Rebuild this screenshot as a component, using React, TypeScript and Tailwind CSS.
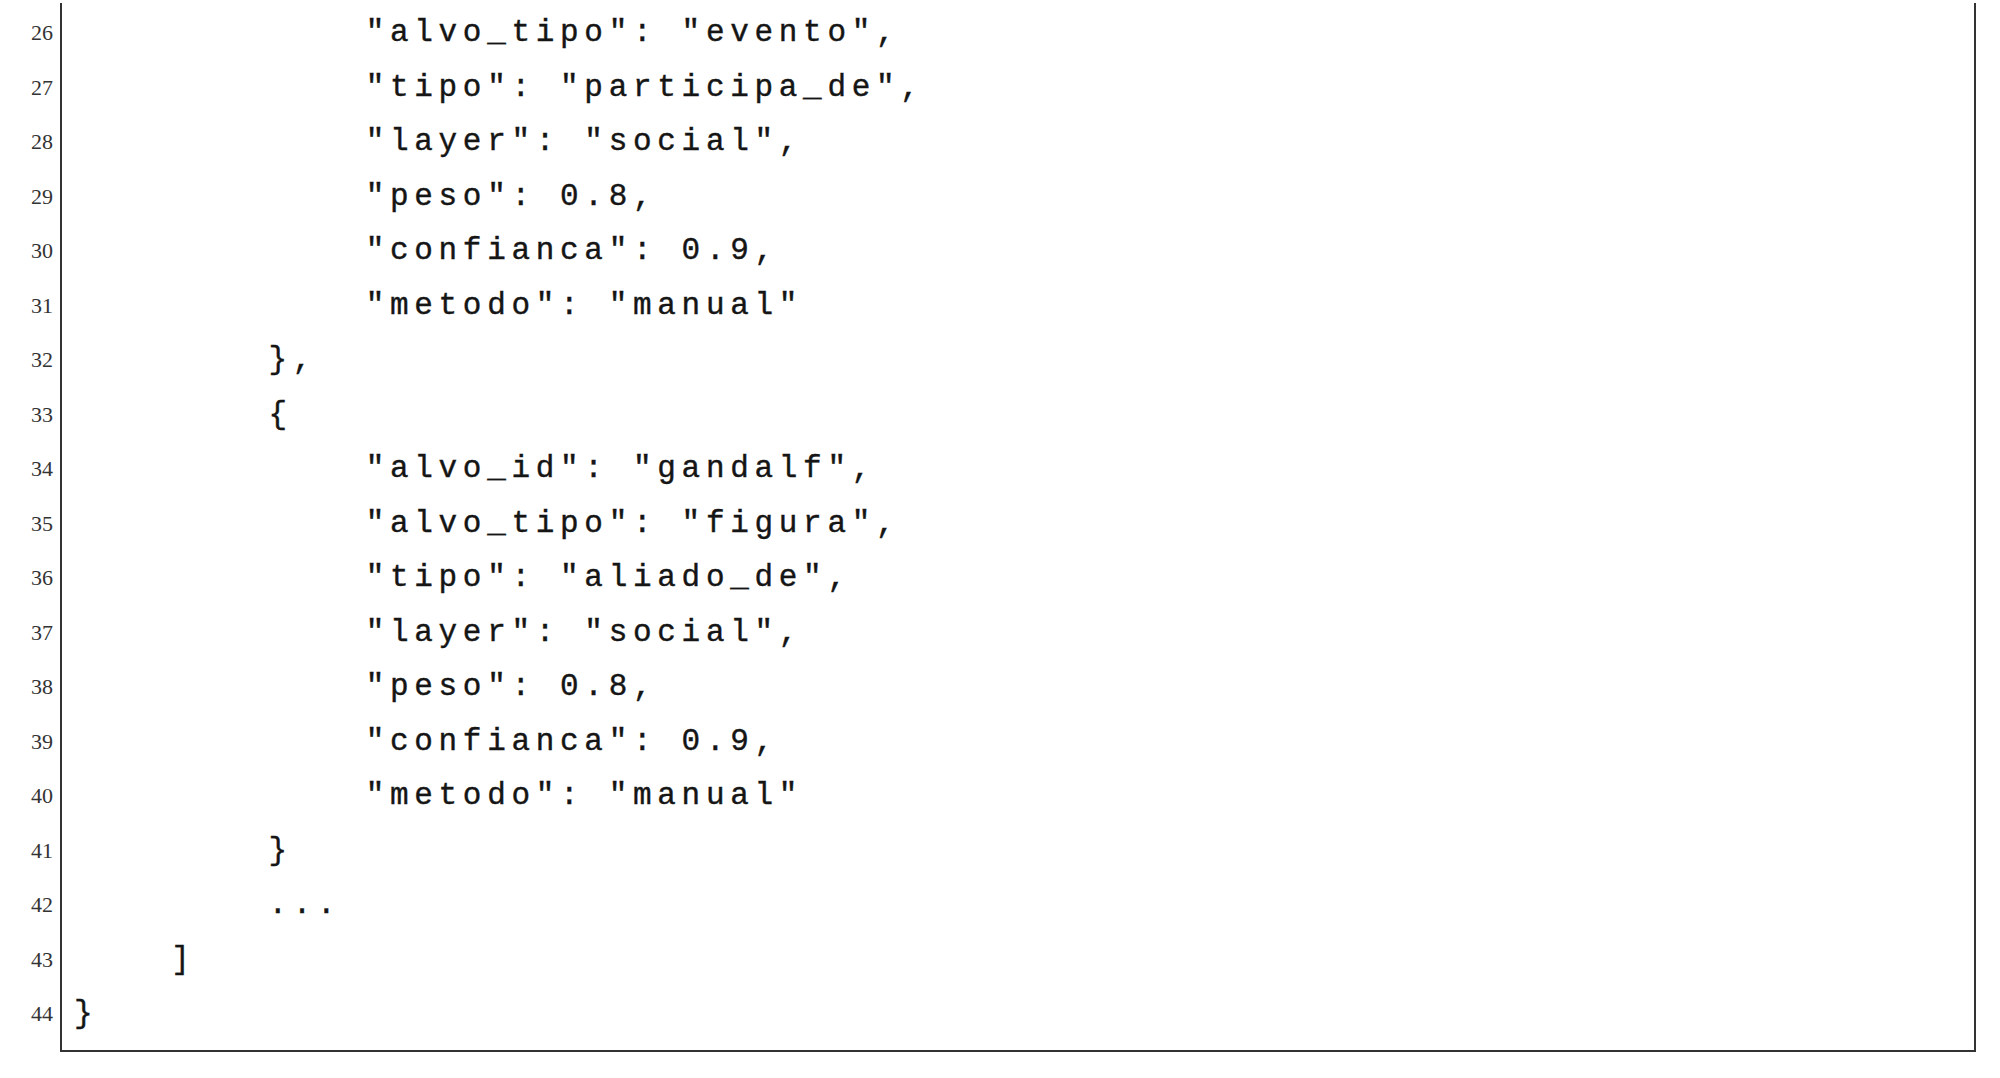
import React from "react";

const lines: [number, string][] = [
  [26, '            "alvo_tipo": "evento",'],
  [27, '            "tipo": "participa_de",'],
  [28, '            "layer": "social",'],
  [29, '            "peso": 0.8,'],
  [30, '            "confianca": 0.9,'],
  [31, '            "metodo": "manual"'],
  [32, "        },"],
  [33, "        {"],
  [34, '            "alvo_id": "gandalf",'],
  [35, '            "alvo_tipo": "figura",'],
  [36, '            "tipo": "aliado_de",'],
  [37, '            "layer": "social",'],
  [38, '            "peso": 0.8,'],
  [39, '            "confianca": 0.9,'],
  [40, '            "metodo": "manual"'],
  [41, "        }"],
  [42, "        ..."],
  [43, "    ]"],
  [44, "}"],
];

export default function App() {
  return (
    <div className="w-[2000px] h-[1078px] bg-white overflow-hidden">
      <div className="flex pt-[3px]">
        <div className="w-[60px] shrink-0 pt-[3px] pr-[7px] flex flex-col items-end">
          {lines.map(([n]) => (
            <div
              key={n}
              className="h-[54.5px] leading-[54.5px] text-[22px] text-[#333333] whitespace-pre"
              style={{ fontFamily: '"Liberation Serif", serif' }}
            >
              {n}
            </div>
          ))}
        </div>
        <div className="w-[1916px] border-l-2 border-r-2 border-b-2 border-[#333333] pt-[3px] pb-[8px] pl-[12px]">
          {lines.map(([n, t]) => (
            <div
              key={n}
              className="h-[54.5px] leading-[54.5px] text-[31px] tracking-[5.7px] text-[#151515] whitespace-pre [-webkit-text-stroke:0.4px_#151515]"
              style={{ fontFamily: '"Liberation Mono", monospace' }}
            >
              {t}
            </div>
          ))}
        </div>
      </div>
    </div>
  );
}
